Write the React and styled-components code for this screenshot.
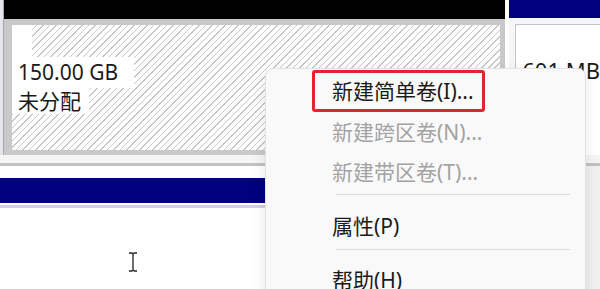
import styled, { createGlobalStyle } from "styled-components";

const GlobalStyle = createGlobalStyle`
  html, body {
    margin: 0;
    padding: 0;
    background: #fff;
  }
  body {
    font-family: "Noto Sans", "Noto Sans CJK SC", sans-serif;
  }
`;

const Page = styled.div`
  position: relative;
  width: 600px;
  height: 289px;
  overflow: hidden;
  background: #fff;
  display: flex;
  flex-direction: column;
`;

const DiskRow = styled.div`
  display: flex;
  height: 155px;
`;

const LeftStrip = styled.div`
  width: 3px;
  background: #e4e6ec;
  border-right: 1px solid #a4a8b4;
  border-bottom-right-radius: 3px;
  height: 158px;
`;

const Partition = styled.div`
  width: 503px;
  display: flex;
  flex-direction: column;
`;

const Header = styled.div`
  height: ${(p) => p.$h}px;
  background: ${(p) => p.$color};
`;

const PartitionBody = styled.div`
  flex: 1;
  background: #c9c9c9;
  padding: 6px 5px 5px 8px;
  display: flex;
`;

const Hatch = styled.div`
  flex: 1;
  background: repeating-linear-gradient(
    135deg,
    #ffffff 0 3.2px,
    #c8c8c8 3.2px 4.3px,
    #ffffff 4.3px 4.6px
  );
  display: flex;
  flex-direction: column;
  align-items: flex-start;
`;

const LabelLine = styled.span`
  display: inline-block;
  background: #fff;
  height: ${(p) => p.$h}px;
  line-height: ${(p) => p.$h}px;
  padding: 0 ${(p) => p.$pr}px 0 6px;
  font-size: 21px;
  color: #1a1a1a;
  white-space: nowrap;
`;

const Gap = styled.div`
  width: 4px;
  background: #fff;
`;

const RightPart = styled.div`
  flex: 1;
  display: flex;
  flex-direction: column;
`;

const RightBody = styled.div`
  flex: 1;
  background: #f6f6f6;
  padding: 6px 0 0 6px;
  display: flex;
`;

const RightInner = styled.div`
  flex: 1;
  background: #fff;
  border-top: 1px solid #c4c4c4;
  border-left: 1px solid #c4c4c4;
  padding: 30px 0 0 6px;
  font-size: 22px;
  color: #1a1a1a;
  white-space: nowrap;
  overflow: hidden;
`;

const Spacer = styled.div`
  height: 8px;
  background: #f5f5f5;
`;

const LowerPane = styled.div`
  flex: 1;
  display: flex;
  border-top: 3px solid #c2c2c2;
`;

const LowerMain = styled.div`
  flex: 1 1 0;
  min-width: 0;
  padding-top: 12px;
  background: #fff;
`;

const NavyBand = styled.div`
  height: 25px;
  width: 540px;
  background: #000080;
  margin-bottom: 2px;
`;

const Rule = styled.div`
  height: 3px;
  width: 540px;
  background: #d2d2d2;
`;

const Scrollbar = styled.div`
  flex: 0 0 16px;
  box-sizing: border-box;
  background: #f0f0f0;
  border-left: 1px solid #dedede;
`;

const Menu = styled.div`
  position: absolute;
  left: 265px;
  top: 68px;
  width: 321px;
  height: 250px;
  background: #f9f9f9;
  border: 1px solid #e2e2e2;
  border-radius: 8px;
  box-shadow: 0 4px 14px rgba(0, 0, 0, 0.1);
  padding-top: 1px;
  box-sizing: border-box;
`;

const Item = styled.div`
  height: ${(p) => (p.$first ? 42 : 40)}px;
  line-height: ${(p) => (p.$first ? 42 : 40)}px;
  padding-left: 66px;
  font-size: 21px;
  color: ${(p) => (p.$disabled ? "#a3a3a3" : "#1b1b1b")};
  white-space: nowrap;
`;

const Highlight = styled.span`
  display: inline-block;
  box-sizing: border-box;
  height: 42px;
  line-height: 36px;
  margin-left: -20px;
  padding: 0 8px 0 17px;
  border: 3px solid #e1252d;
  border-radius: 3px;
`;

const Separator = styled.div`
  height: 1px;
  background: #dcdcdc;
  margin: ${(p) => p.$top}px 15px ${(p) => p.$bottom}px 70px;
`;

const Cursor = styled.svg`
  position: absolute;
  left: 127px;
  top: 252px;
`;

export default function App() {
  return (
    <>
      <GlobalStyle />
      <Page>
        <DiskRow>
          <LeftStrip />
          <Partition>
            <Header $h={19} $color="#000" />
            <PartitionBody>
              <Hatch>
                <LabelLine $h={32} $pr={14} />
                <LabelLine $h={31} $pr={16}>150.00 GB</LabelLine>
                <LabelLine $h={26} $pr={8}>未分配</LabelLine>
              </Hatch>
            </PartitionBody>
          </Partition>
          <Gap />
          <RightPart>
            <Header $h={18} $color="#000080" />
            <RightBody>
              <RightInner>601 MB</RightInner>
            </RightBody>
          </RightPart>
        </DiskRow>
        <Spacer />
        <LowerPane>
          <LowerMain>
            <NavyBand />
            <Rule />
          </LowerMain>
          <Scrollbar />
        </LowerPane>

        <Menu>
          <Item $first>
            <Highlight>新建简单卷(I)...</Highlight>
          </Item>
          <Item $disabled>新建跨区卷(N)...</Item>
          <Item $disabled>新建带区卷(T)...</Item>
          <Separator $top={2} $bottom={11} />
          <Item>属性(P)</Item>
          <Separator $top={3} $bottom={10} />
          <Item>帮助(H)</Item>
        </Menu>

        <Cursor width="12" height="20" viewBox="0 0 12 20">
          <path
            d="M2 1 H4.5 Q6 1 6 2.5 Q6 1 7.5 1 H10 M6 2.5 V17.5 M2 19 H4.5 Q6 19 6 17.5 Q6 19 7.5 19 H10"
            fill="none"
            stroke="#222"
            strokeWidth="1.3"
          />
        </Cursor>
      </Page>
    </>
  );
}
